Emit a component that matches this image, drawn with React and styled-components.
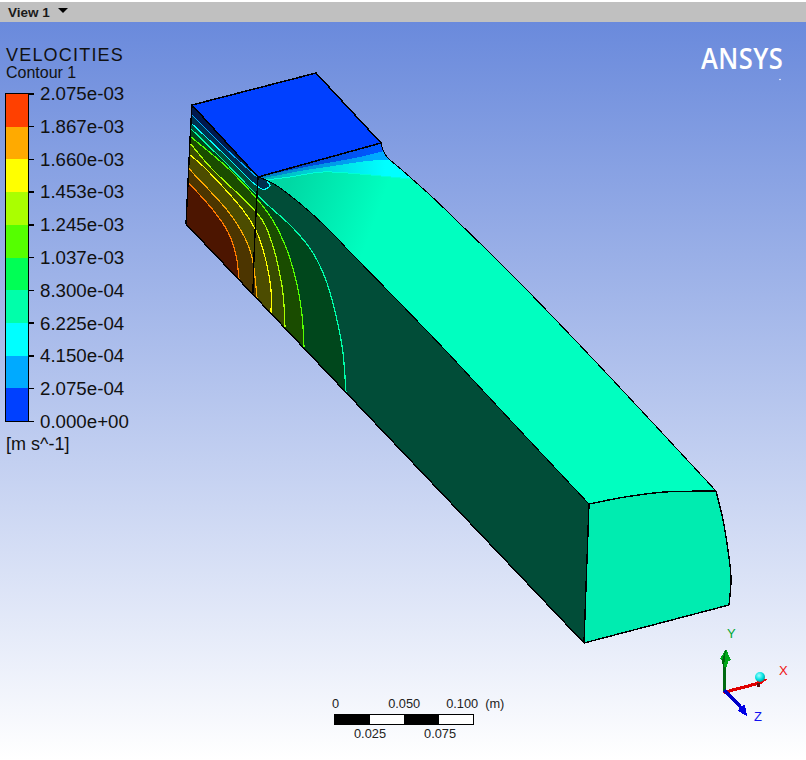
import React from "react";
import styled, { createGlobalStyle } from "styled-components";

const Global = createGlobalStyle`
  html, body { margin: 0; padding: 0; background: #fff; }
  #root { width: 806px; height: 760px; overflow: hidden; }
`;

const Page = styled.div`
  display: flex;
  flex-direction: column;
  width: 806px;
  height: 760px;
  font-family: "Liberation Sans", Arial, sans-serif;
  color: #111;
`;
const TabBar = styled.div`
  display: flex;
  align-items: center;
  gap: 8px;
  height: 20px;
  margin-top: 2px;
  padding-left: 8px;
  background: #c0c0c0;
  flex: none;
`;
const TabTitle = styled.span`
  font-size: 13.5px;
  font-weight: 700;
  color: #1a1a1a;
`;
const TabCaret = styled.span`
  width: 0;
  height: 0;
  border-left: 5px solid transparent;
  border-right: 5px solid transparent;
  border-top: 5px solid #000;
  margin-bottom: 3px;
`;
const Viewport = styled.div`
  position: relative;
  flex: 1;
  background: linear-gradient(180deg, #6a8adc 0%, #ffffff 100%);
  overflow: hidden;
`;
const Legend = styled.div`
  position: absolute;
  left: 6px;
  top: 22px;
  display: flex;
  flex-direction: column;
`;
const LegendTitle = styled.div`
  font-size: 18px;
  line-height: 22px;
  letter-spacing: 1.2px;
`;
const LegendSub = styled.div`
  font-size: 16px;
  line-height: 14px;
`;
const ScaleColumn = styled.div`
  display: flex;
  margin-top: 7px;
  margin-left: -1px;
`;
const ColorBar = styled.div`
  display: flex;
  flex-direction: column;
  box-sizing: border-box;
  width: 24px;
  height: 329px;
  border: 1.5px solid #000;
  flex: none;
  margin-top: 6px;
`;
const ColorStep = styled.div`
  flex: 1;
  background: ${(p) => p.$color};
`;
const Ticks = styled.div`
  display: flex;
  flex-direction: column;
  justify-content: space-between;
  width: 5px;
  height: 329px;
  margin-top: 6px;
  flex: none;
`;
const Tick = styled.div`
  height: 1.5px;
  background: #000;
`;
const Labels = styled.div`
  display: flex;
  flex-direction: column;
  justify-content: space-between;
  height: 348px;
  margin: -3px 0 0 6px;
`;
const Label = styled.div`
  font-size: 18.7px;
  line-height: 20px;
`;
const Units = styled.div`
  font-size: 18px;
  line-height: 20px;
  margin-top: 2px;
`;
const Logo = styled.div`
  position: absolute;
  left: 701px;
  top: 17px;
  font-family: "Open Sans", sans-serif;
  font-weight: 600;
  font-size: 28px;
  line-height: 38px;
  letter-spacing: 0.5px;
  color: #fff;
  transform: scaleX(0.91);
  transform-origin: left center;
`;
const Model = styled.svg`
  position: absolute;
  left: 0;
  top: -22px;
  width: 806px;
  height: 760px;
`;
const ScaleBar = styled.div`
  position: absolute;
  left: 332px;
  top: 674px;
  display: flex;
  flex-direction: column;
  font-size: 12.8px;
  line-height: 15px;
  color: #222;
`;
const ScaleRow = styled.div`
  display: flex;
  padding-left: ${(p) => p.$pad}px;
  gap: ${(p) => p.$gap}px;
`;
const ScaleTrack = styled.div`
  display: flex;
  box-sizing: border-box;
  width: 140px;
  height: 11px;
  margin: 3px 0 1px 2px;
  border: 1px solid #000;
`;
const ScaleCell = styled.div`
  flex: 1;
  background: ${(p) => (p.$dark ? "#000" : "#fff")};
`;

const steps = ["#ff4000", "#ffaa00", "#ffff00", "#aaff00", "#55ff00", "#00ff55", "#00ffaa", "#00ffff", "#00aaff", "#0040ff"];
const values = ["2.075e-03", "1.867e-03", "1.660e-03", "1.453e-03", "1.245e-03", "1.037e-03", "8.300e-04", "6.225e-04", "4.150e-04", "2.075e-04", "0.000e+00"];

const smooth = (pts) => {
  let d = `M${pts[0][0]},${pts[0][1]}`;
  for (let i = 0; i < pts.length - 1; i++) {
    const p0 = pts[i - 1] || pts[i];
    const p1 = pts[i];
    const p2 = pts[i + 1];
    const p3 = pts[i + 2] || p2;
    d += ` C${p1[0] + (p2[0] - p0[0]) / 6},${p1[1] + (p2[1] - p0[1]) / 6} ${p2[0] - (p3[0] - p1[0]) / 6},${p2[1] - (p3[1] - p1[1]) / 6} ${p2[0]},${p2[1]}`;
  }
  return d;
};

const arc = [[259, 177], [270, 182], [283, 190], [310, 212], [337, 238], [350, 252], [395, 298], [447, 352], [513, 423], [589, 504]];
const rightEdge = [[381, 143], [383, 150], [388, 158], [402, 170], [430, 195], [453, 217], [522, 285], [610, 377], [716, 491]];
const frontTop = [[589, 504], [625, 497], [665, 492], [716, 491]];
const frontRight = [[716, 491], [723, 520], [729, 557], [731, 580], [729, 605]];
const frontLeft = [[589, 504], [586, 587], [584, 643]];
const leftEdge = [[192, 105], [190, 140], [188, 183], [186, 224]];

const sideFace = `M192,105 L259,177 ${smooth(arc).replace(/^M[^ ]+/, "")} L584,643 L186,224 L188,183 L190,140 Z`;
const topFace = `M259,177 L381,143 ${smooth(rightEdge).replace(/^M[^ ]+/, "")} ${smooth([...frontTop].reverse()).replace(/^M[^ ]+/, "")} ${smooth([...arc].reverse()).replace(/^M[^ ]+/, "")} Z`;
const frontFace = `${smooth(frontTop)} ${smooth(frontRight).replace(/^M[^ ]+/, "")} L584,643 ${smooth([...frontLeft].reverse()).replace(/^M[^ ]+/, "")} Z`;

const contours = [
  { stroke: "#00ffaa", fill: "#00471c", pts: [[190, 128], [223, 160], [250, 188], [270, 207], [293, 228], [313, 253], [327, 283], [337, 320], [343, 353], [346, 392]] },
  { stroke: "#55ff00", fill: "#1a4c00", pts: [[191, 137], [232, 172], [268, 213], [285, 245], [296, 280], [302, 315], [304, 347]] },
  { stroke: "#aaff00", fill: "#384c00", pts: [[190, 143], [213, 170], [257, 213], [272, 243], [281, 280], [284, 305], [285, 327]] },
  { stroke: "#ffff00", fill: "#4c4c00", pts: [[190, 155], [207, 170], [243, 210], [258, 235], [267, 265], [271, 290], [271, 313]] },
  { stroke: "#ffaa00", fill: "#4c3500", pts: [[188, 167], [193, 173], [227, 210], [245, 238], [253, 262], [257, 298]] },
  { stroke: "#ff7a00", fill: "#4c1500", pts: [[188, 182], [213, 210], [228, 232], [236, 255], [239, 279]] },
];
const closeLow = " L186,224 Z";

const topBands = [
  { fill: "url(#bandCyan)", pts: [[258, 178], [265, 180], [290, 177], [323, 172], [360, 174], [410, 179]] },
  { fill: "url(#bandSky)", pts: [[258, 177], [263, 178], [300, 171], [333, 166], [367, 161], [390, 160]] },
  { fill: "url(#bandBlue)", pts: [[258, 177], [300, 168], [333, 162], [360, 157], [384, 151]] },
];

function SimulationModel() {
  return (
    <Model viewBox="0 0 806 760">
      <defs>
        <clipPath id="side"><path d={sideFace} /></clipPath>
        <clipPath id="top"><path d={topFace} /></clipPath>
        <linearGradient id="topShade" gradientUnits="userSpaceOnUse" x1="290" y1="180" x2="378" y2="212">
          <stop offset="0" stopColor="#00d8a4" />
          <stop offset="1" stopColor="#00ffc0" />
        </linearGradient>
        <linearGradient id="bandCyan" gradientUnits="userSpaceOnUse" x1="265" y1="0" x2="385" y2="0">
          <stop offset="0" stopColor="#00b4bc" />
          <stop offset="1" stopColor="#00ffff" />
        </linearGradient>
        <linearGradient id="bandSky" gradientUnits="userSpaceOnUse" x1="265" y1="0" x2="375" y2="0">
          <stop offset="0" stopColor="#0080c8" />
          <stop offset="1" stopColor="#00aaff" />
        </linearGradient>
        <linearGradient id="bandBlue" gradientUnits="userSpaceOnUse" x1="265" y1="0" x2="375" y2="0">
          <stop offset="0" stopColor="#0040c0" />
          <stop offset="1" stopColor="#0058ff" />
        </linearGradient>
        <radialGradient id="ball" cx="0.4" cy="0.35" r="0.7">
          <stop offset="0" stopColor="#a0ffff" />
          <stop offset="0.6" stopColor="#00e0e0" />
          <stop offset="1" stopColor="#008a8a" />
        </radialGradient>
      </defs>

      <g shapeRendering="crispEdges">
        <path d={sideFace} fill="#014d38" />
        <g clipPath="url(#side)">
          <path d={`${smooth([[190, 122], [225, 155], [250, 180], [262, 189], [270, 186], [262, 176]])} L192,100 Z`} fill="#00304e" />
          <path d={`${smooth([[190, 113], [225, 148], [258, 178]])} L192,100 Z`} fill="#00184e" />
          {contours.map((c) => (
            <path key={c.stroke} d={smooth(c.pts) + closeLow} fill={c.fill} />
          ))}
          {contours.map((c) => (
            <path key={c.stroke} d={smooth(c.pts)} fill="none" stroke={c.stroke} strokeWidth="1.2" />
          ))}
          <path d={smooth([[190, 122], [225, 155], [250, 180], [262, 189], [270, 186], [266, 180]])} fill="none" stroke="#00ffff" strokeWidth="1.1" />
          <path d={smooth([[190, 113], [225, 148], [258, 178]])} fill="none" stroke="#00aaff" strokeWidth="1.1" />
        </g>

        <path d={topFace} fill="url(#topShade)" />
        <g clipPath="url(#top)">
          {topBands.map((b) => (
            <path key={b.fill} d={`${smooth(b.pts)} L420,120 L250,160 Z`} fill={b.fill} />
          ))}
          <path d={smooth([[265, 180], [290, 177], [323, 172], [360, 174], [410, 179]])} fill="none" stroke="#00ffd8" strokeWidth="1" />
        </g>

        <path d="M192,105 L316,73 L381,143 L258,177 Z" fill="#0040ff" stroke="#000" strokeWidth="1.5" strokeLinejoin="round" />
        <path d={frontFace} fill="#00ecb0" />

        <g fill="none" stroke="#000" strokeWidth="1.4">
          <path d={smooth(leftEdge)} />
          <path d="M186,224 L584,643" />
          <path d="M192,105 L258,177" />
          <path d={smooth([[258, 177], [256, 213], [254, 257], [253, 293]])} />
          <path d={smooth(rightEdge)} strokeWidth="1" />
          <path d={smooth(arc)} strokeWidth="1" />
          <path d={smooth(frontTop)} />
          <path d={smooth(frontRight)} />
          <path d={smooth(frontLeft)} />
          <path d="M729,605 L584,643" />
        </g>

        <path d="M723,692 L723,665 L726,665 L726,692 Z" fill="#006a12" />
        <path d="M726,649 L731,660 L728,661 L727,667 L723,667 L722,661 L720,659 Z" fill="#00a818" />
        <path d="M726,649 L722,661 L723,667 L724,667 Z" fill="#00660f" />
        <path d="M723,691 L757,682 L758,685 L724,694 Z" fill="#e00000" />
        <path d="M768,679 L756,678 L758,686 Z" fill="#f00000" />
        <rect x="757" y="683" width="3" height="4" fill="#5a1010" />
        <path d="M723,691 L725,689 L741,705 L739,708 Z" fill="#0000c8" />
        <path d="M747,716 L745,705 L740,706 L738,711 Z" fill="#0000e6" />
      </g>
      <circle cx="760" cy="677" r="5" fill="url(#ball)" />
      <circle cx="780" cy="79.5" r="0.8" fill="#fff" />
      <g fontFamily="Liberation Sans, sans-serif" fontSize="13">
        <text x="727" y="638" fill="#00a832">Y</text>
        <text x="779" y="675" fill="#f01010">X</text>
        <text x="754" y="721" fill="#1010f0">Z</text>
      </g>
    </Model>
  );
}

export default function App() {
  return (
    <Page>
      <Global />
      <TabBar>
        <TabTitle>View 1</TabTitle>
        <TabCaret />
      </TabBar>
      <Viewport>
        <SimulationModel />
        <Legend>
          <LegendTitle>VELOCITIES</LegendTitle>
          <LegendSub>Contour 1</LegendSub>
          <ScaleColumn>
            <ColorBar>
              {steps.map((c) => <ColorStep key={c} $color={c} />)}
            </ColorBar>
            <Ticks>
              {values.map((v) => <Tick key={v} />)}
            </Ticks>
            <Labels>
              {values.map((v) => <Label key={v}>{v}</Label>)}
            </Labels>
          </ScaleColumn>
          <Units>[m s^-1]</Units>
        </Legend>
        <Logo>ANSYS</Logo>
        <ScaleBar>
          <ScaleRow $pad={0} $gap={49}>
            <span>0</span>
            <ScaleRow $pad={0} $gap={26}>
              <span>0.050</span>
              <ScaleRow $pad={0} $gap={7}>
                <span>0.100</span>
                <span>(m)</span>
              </ScaleRow>
            </ScaleRow>
          </ScaleRow>
          <ScaleTrack>
            <ScaleCell $dark />
            <ScaleCell />
            <ScaleCell $dark />
            <ScaleCell />
          </ScaleTrack>
          <ScaleRow $pad={22} $gap={38}>
            <span>0.025</span>
            <span>0.075</span>
          </ScaleRow>
        </ScaleBar>
      </Viewport>
    </Page>
  );
}
